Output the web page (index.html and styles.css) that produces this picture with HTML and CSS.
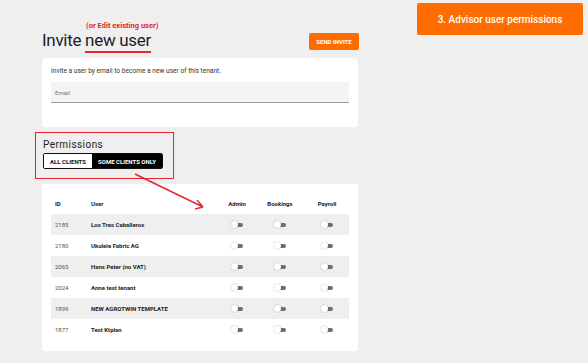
FILE: index.html
```html
<!DOCTYPE html>
<html lang="en">
<head>
    <meta charset="UTF-8">
    <title>Invite new user</title>
    <link rel="stylesheet" href="styles.css">
</head>
<body>
    <div class="step-label">3. Advisor user permissions</div>
    <div class="page">
        <div class="page-header">
            <h1 class="title">Invite <span class="title-mark">new user<span class="note">(or Edit existing user)</span></span></h1>
            <div class="send-button">SEND INVITE</div>
        </div>
        <div class="card invite-card">
            <p class="hint">Invite a user by email to become a new user of this tenant.</p>
            <div class="email-field">Email</div>
        </div>
        <div class="permissions">
            <div class="permissions-title">Permissions</div>
            <div class="segmented">
                <div class="segment">ALL CLIENTS</div>
                <div class="segment segment-active">SOME CLIENTS ONLY</div>
            </div>
        </div>
        <div class="card table-card">
            <div class="row row-head">
                <div class="cell cell-id">ID</div>
                <div class="cell cell-user">User</div>
                <div class="cell cell-flag flag-admin">Admin</div>
                <div class="cell cell-flag flag-bookings">Bookings</div>
                <div class="cell cell-flag flag-payroll">Payroll</div>
            </div>
            <div class="row row-shaded">
                <div class="cell cell-id">2185</div>
                <div class="cell cell-user">Los Tres Caballeros</div>
                <div class="cell cell-flag flag-admin"><span class="switch"></span></div>
                <div class="cell cell-flag flag-bookings"><span class="switch"></span></div>
                <div class="cell cell-flag flag-payroll"><span class="switch"></span></div>
            </div>
            <div class="row">
                <div class="cell cell-id">2180</div>
                <div class="cell cell-user">Ukulele Fabric AG</div>
                <div class="cell cell-flag flag-admin"><span class="switch"></span></div>
                <div class="cell cell-flag flag-bookings"><span class="switch"></span></div>
                <div class="cell cell-flag flag-payroll"><span class="switch"></span></div>
            </div>
            <div class="row row-shaded">
                <div class="cell cell-id">2065</div>
                <div class="cell cell-user">Hans Peter (no VAT)</div>
                <div class="cell cell-flag flag-admin"><span class="switch"></span></div>
                <div class="cell cell-flag flag-bookings"><span class="switch"></span></div>
                <div class="cell cell-flag flag-payroll"><span class="switch"></span></div>
            </div>
            <div class="row">
                <div class="cell cell-id">2024</div>
                <div class="cell cell-user">Anne test tenant</div>
                <div class="cell cell-flag flag-admin"><span class="switch"></span></div>
                <div class="cell cell-flag flag-bookings"><span class="switch"></span></div>
                <div class="cell cell-flag flag-payroll"><span class="switch"></span></div>
            </div>
            <div class="row row-shaded">
                <div class="cell cell-id">1899</div>
                <div class="cell cell-user">NEW AGROTWIN TEMPLATE</div>
                <div class="cell cell-flag flag-admin"><span class="switch"></span></div>
                <div class="cell cell-flag flag-bookings"><span class="switch"></span></div>
                <div class="cell cell-flag flag-payroll"><span class="switch"></span></div>
            </div>
            <div class="row">
                <div class="cell cell-id">1877</div>
                <div class="cell cell-user">Test Ktplan</div>
                <div class="cell cell-flag flag-admin"><span class="switch"></span></div>
                <div class="cell cell-flag flag-bookings"><span class="switch"></span></div>
                <div class="cell cell-flag flag-payroll"><span class="switch"></span></div>
            </div>
        </div>
    </div>
    <svg class="arrow" width="90" height="50" viewBox="0 0 90 50">
        <path d="M1 1 L69 34 M69 34 L63 27 M69 34 L61 36" fill="none" stroke="#e3262f" stroke-width="1.4"/>
    </svg>
</body>
</html>
```

FILE: styles.css
```css
body {
    margin: 0;
    padding: 0;
    background-color: #efefef;
    font-family: Roboto, "Liberation Sans", sans-serif;
    color: #222;
}
.page {
    width: 316px;
    margin-left: 42px;
    padding-top: 29px;
}
.page-header {
    display: flex;
    justify-content: space-between;
    align-items: center;
    height: 24px;
}
.title {
    margin: 0;
    font-size: 17px;
    font-weight: 400;
    letter-spacing: -0.3px;
    color: #1d1d1d;
}
.title-mark {
    position: relative;
    display: inline-block;
    line-height: 18px;
    padding-bottom: 2px;
    border-bottom: 2px solid #e3262f;
}
.note {
    position: absolute;
    left: 1px;
    top: -10px;
    line-height: normal;
    font-size: 7.5px;
    font-weight: 700;
    color: #e3262f;
    white-space: nowrap;
    letter-spacing: 0;
}
.send-button {
    background-color: #ff6d00;
    color: #fff;
    font-size: 6px;
    font-weight: 700;
    width: 50px;
    height: 17px;
    display: flex;
    justify-content: center;
    align-items: center;
    border-radius: 2px;
    margin-right: -1px;
}
.card {
    background-color: #fff;
    border-radius: 3px;
}
.invite-card {
    margin-top: 5px;
    padding: 9px 9px 24px;
}
.hint {
    margin: 0 0 7px;
    font-size: 6.6px;
    color: #333;
}
.email-field {
    background-color: #f4f4f4;
    border-bottom: 1px solid #9a9a9a;
    height: 20px;
    padding-left: 4px;
    display: flex;
    align-items: center;
    font-size: 6px;
    color: #777;
}
.permissions {
    margin-top: 5px;
    margin-left: -7px;
    width: 130px;
    padding: 6px 0 9px 7px;
    border: 1.5px solid #e3262f;
}
.permissions-title {
    font-size: 10px;
    letter-spacing: 0.45px;
    color: #222;
    margin-bottom: 3px;
}
.segmented {
    display: flex;
    width: 120px;
    height: 16px;
    border: 1.2px solid #111;
    border-radius: 2px;
    overflow: hidden;
    box-sizing: border-box;
}
.segment {
    display: flex;
    justify-content: center;
    align-items: center;
    font-size: 6px;
    font-weight: 700;
    background-color: #fff;
    color: #111;
    width: 48px;
}
.segment-active {
    flex-grow: 1;
    background-color: #000;
    color: #fff;
}
.table-card {
    margin-top: 5px;
    padding: 8px 9px 11px;
}
.row {
    display: flex;
    align-items: center;
    height: 21px;
    font-size: 6px;
}
.row-head {
    height: 22px;
    font-weight: 700;
}
.row-shaded {
    background-color: #efefef;
}
.cell-id {
    width: 36px;
    padding-left: 4px;
    color: #555;
}
.row-head .cell-id {
    color: #222;
}
.cell-user {
    flex-grow: 1;
    font-weight: 700;
}
.cell-flag {
    display: flex;
    justify-content: center;
    font-weight: 700;
}
.flag-admin {
    width: 36px;
}
.flag-bookings {
    width: 50px;
}
.flag-payroll {
    width: 44px;
}
.switch {
    position: relative;
    width: 11px;
    height: 7px;
}
.switch::before {
    content: "";
    position: absolute;
    right: 0;
    top: 1.5px;
    width: 8px;
    height: 4.5px;
    border-radius: 2px;
    background-color: #6f6f6f;
}
.switch::after {
    content: "";
    position: absolute;
    left: -1px;
    top: -0.5px;
    width: 7.5px;
    height: 7.5px;
    border-radius: 50%;
    background-color: #fff;
    box-shadow: 0 0 1.5px rgba(0, 0, 0, 0.35);
}
.step-label {
    position: absolute;
    left: 417px;
    top: 3px;
    width: 166px;
    height: 32px;
    background-color: #ff6d00;
    color: #fff;
    font-size: 10px;
    font-weight: 500;
    display: flex;
    justify-content: center;
    align-items: center;
    border-radius: 2px;
}
.arrow {
    position: absolute;
    left: 134px;
    top: 173px;
}
```
